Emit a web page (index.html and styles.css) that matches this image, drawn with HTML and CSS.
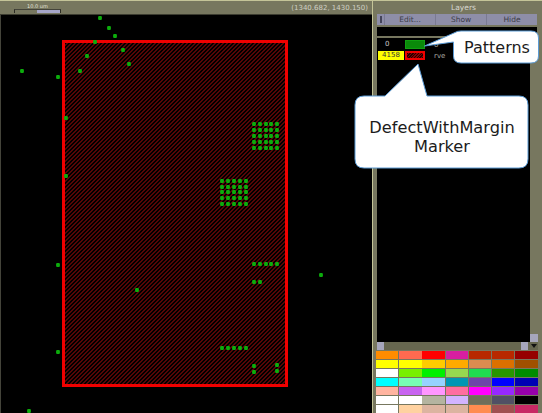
FILE: index.html
```html
<!DOCTYPE html>
<html lang="en">
<head>
  <meta charset="UTF-8" />
  <title>Layers</title>
  <link rel="stylesheet" href="styles.css">
</head>
<body>
  <div class="app">
    <div class="main">
      <div class="topbar">
        <div class="scale">
          <span class="scale-label">10.0 um</span>
          <div class="scale-bar"><div class="scale-fill"></div></div>
        </div>
        <span class="coords">(1340.682, 1430.150)</span>
      </div>
      <div class="canvas">
        <div class="marker"></div>
        <svg class="dots" id="dots" width="372" height="398" viewBox="0 15 372 398"></svg>
      </div>
    </div>

    <div class="panel">
      <div class="panel-title">Layers</div>
      <div class="toolbar">
        <button class="tool tool-menu"><span class="menu-mark"></span></button>
        <button class="tool">Edit...</button>
        <button class="tool">Show</button>
        <button class="tool">Hide</button>
      </div>
      <div class="filter"></div>
      <div class="list-wrap">
        <div class="list">
          <div class="layer">
            <span class="layer-count">0</span>
            <span class="swatch swatch-green"></span>
            <span class="layer-name">0</span>
          </div>
          <div class="layer">
            <span class="layer-count layer-count-on">4158</span>
            <span class="swatch swatch-red"></span>
            <span class="layer-name">rve</span>
          </div>
        </div>
        <div class="vscroll">
          <span class="vscroll-up"></span>
        </div>
      </div>
      <div class="hscroll">
        <span class="scroll-btn"></span>
        <span class="scroll-btn scroll-btn-right"></span>
        <span class="scroll-corner"></span>
      </div>
      <div class="palette" id="palette"></div>
    </div>
  </div>

  <div class="callout callout-patterns">
    <svg width="116" height="36" viewBox="0 0 116 36"><path class="bubble" d="M0.5 16 L31 2.5 Q33 1 37 1 L107 1 Q114.5 1 114.5 8 L114.5 26 Q114.5 33 107 33 L37 33 Q29.5 33 29.5 26 L29.5 12 Z"/></svg>
    <span class="callout-text">Patterns</span>
  </div>
  <div class="callout callout-defect">
    <svg width="176" height="107" viewBox="0 0 176 107"><path class="bubble" d="M64 1 L73 33 L165 33 Q174 33 174 42 L174 96 Q174 105 165 105 L10 105 Q1 105 1 96 L1 42 Q1 33 10 33 L31 33 Z"/></svg>
    <span class="callout-text">DefectWithMargin<br>Marker</span>
  </div>

  <script>
    // defect dots, in page coordinates
    const dots = [
      [100,18],[109,28],[115,36],[95,42],[123,50],[87,56],[129,64],[80,71],[22,71],[58,77],
      [66,118],[66,176],[58,265],[137,290],[58,352],[29,411],[321,275],
      [254,264],[260,264],[266,264],[271,264],[277,264],[254,282],[260,282],
      [222,348],[228,348],[234,348],[240,348],[246,348],
      [254,366],[254,372],[277,365],[277,371]
    ];
    [254,260,266,271,277].forEach(x => [124,130,136,142,148].forEach(y => dots.push([x,y])));
    [222,228,234,240,246].forEach(x => [181,187,192,198,204].forEach(y => dots.push([x,y])));

    document.getElementById('dots').innerHTML = dots.map(d =>
      `<rect x="${d[0]-1.9}" y="${d[1]-1.9}" width="3.8" height="3.8" rx="1" fill="#0cac0c"/>`).join('');

    const colors = [
      '#ff8c00','#ff6a50','#ff0000','#d81ea0','#b82800','#b82800','#960000',
      '#ffff00','#ffff00','#ffcc00','#ffaa00','#dc8c50','#dc7000','#a05000',
      '#ffffff','#78f000','#00f000','#96d850','#20dc50','#289600','#008c00',
      '#00ffff','#78ffb4','#96d2ff','#0096b4','#6e46aa','#0000ff','#0000b4',
      '#ffb4a0','#c864f0','#ff96ff','#ff6ea0','#ff00ff','#9628ff','#9600aa',
      '#ffffff','#ffffff','#b4b4a0','#d2b4ff','#6e6e5a','#505064','#000000',
      '#ffffff','#ffd2a0','#dcb4a0','#dcb4a0','#ff8c50','#a05050','#c82864'
    ];
    document.getElementById('palette').innerHTML = colors.map(c =>
      `<span class="chip" style="background:${c}"></span>`).join('');
  </script>
</body>
</html>
```

FILE: styles.css
```css
html, body {
  margin: 0;
  padding: 0;
  height: 100%;
  overflow: hidden;
}

body {
  font-family: "DejaVu Sans", sans-serif;
  background: #000;
  position: relative;
}

.app {
  display: flex;
  height: 413px;
  width: 542px;
}

.main {
  width: 372px;
  flex: none;
  display: flex;
  flex-direction: column;
}

.topbar {
  height: 15px;
  flex: none;
  background: #77775f;
  border-top: 1px solid #c4c498;
  border-bottom: 1px solid #3c3c30;
  box-sizing: border-box;
  display: flex;
  justify-content: space-between;
  align-items: center;
  padding: 0 4px 0 14px;
  color: #d0d0c4;
  font-size: 7px;
}

.scale {
  width: 47px;
  text-align: center;
  line-height: 6px;
}

.scale-label {
  display: block;
  font-size: 5px;
  color: #e4e4dc;
}

.scale-bar {
  height: 3px;
  border-left: 1px solid #2c2c24;
  border-right: 1px solid #2c2c24;
  border-top: 1px solid #44443a;
  display: flex;
  justify-content: flex-end;
}

.scale-fill {
  width: 23px;
  background: #a6a6c8;
}

.canvas {
  flex: 1;
  position: relative;
  background: #000;
  border-left: 1px solid #44443a;
  overflow: hidden;
}

.marker {
  position: absolute;
  left: 61px;
  top: 25px;
  width: 220px;
  height: 341px;
  border: 3px solid #f00000;
  background: repeating-linear-gradient(135deg, #000 0, #000 1.414px, #560606 1.414px, #560606 2.828px);
}

.dots {
  position: absolute;
  left: -1px;
  top: 0;
  filter: blur(0.4px);
}

.panel {
  flex: 1;
  min-width: 0;
  background: #77775f;
  border-top: 1px solid #c4c498;
  border-left: 1px solid #c4c498;
  box-sizing: border-box;
  display: flex;
  flex-direction: column;
  padding: 0 4px 0 3px;
  font-size: 7.5px;
}

.panel-title {
  height: 14px;
  line-height: 13px;
  text-align: center;
  padding-left: 13px;
  color: #d8d8d0;
}

.toolbar {
  display: grid;
  grid-template-columns: 7px repeat(3, 1fr);
  height: 11px;
  margin-left: 1px;
  margin-right: 1px;
  flex: none;
  background: #8e8ea8;
}

.tool {
  border: none;
  border-left: 1px solid #7a7a92;
  background: #8e8ea8;
  color: #3c3c48;
  font: inherit;
  padding: 0;
}

.tool-menu {
  border-left: none;
  display: flex;
  justify-content: center;
  padding-top: 2px;
}

.menu-mark {
  width: 2px;
  height: 7px;
  background: #44445a;
}

.filter {
  height: 9px;
  margin: 2px 1px 0 1px;
  background: #000;
  flex: none;
}

.list-wrap {
  height: 304px;
  flex: none;
  display: flex;
  margin: 2px 0 0 1px;
}

.list {
  flex: 1;
  background: #000;
  padding-top: 2px;
}

.vscroll {
  width: 8px;
  background: #77775f;
  display: flex;
  flex-direction: column;
  justify-content: flex-end;
}

.vscroll-up {
  height: 8px;
  background: #a6a6bc;
}

.layer {
  display: flex;
  align-items: center;
  height: 9px;
  margin-bottom: 2px;
}

.layer-count {
  width: 26px;
  height: 9px;
  line-height: 9px;
  margin-left: 1px;
  padding-left: 7px;
  box-sizing: border-box;
  color: #c8c8c8;
  font-size: 7px;
}

.layer-count-on {
  background: #ffff00;
  color: #333;
  text-align: center;
  padding: 0;
}

.swatch {
  width: 20px;
  height: 9px;
  margin-left: 1px;
  box-sizing: border-box;
}

.swatch-green {
  background: #0a8a0a;
  border: 1px solid #10a010;
}

.swatch-red {
  background: repeating-linear-gradient(135deg, #200 0, #200 1px, #800 1px, #800 2px);
  border: 2px solid #f00000;
}

.layer-name {
  margin-left: 9px;
  font-size: 7px;
  color: #a8a8a0;
}

.hscroll {
  height: 8px;
  flex: none;
  margin-left: 1px;
  display: flex;
  align-items: center;
  justify-content: space-between;
  background: #66664f;
}

.scroll-btn {
  width: 7px;
  height: 8px;
  background: #a6a6bc;
}

.scroll-btn-right {
  margin-left: auto;
  margin-right: 3px;
}

.scroll-corner {
  width: 0;
  height: 0;
  margin-right: 1px;
  border-left: 3px solid transparent;
  border-right: 3px solid transparent;
  border-top: 4px solid #111;
}

.palette {
  display: grid;
  grid-template-columns: repeat(7, 22.4px);
  column-gap: 0.8px;
  grid-auto-rows: 8.2px;
  row-gap: 0.8px;
  margin: 1px 0 0 0;
  flex: none;
}

.chip {
  display: block;
}

.callout {
  position: absolute;
  color: #1c1c1c;
}

.callout svg {
  display: block;
}

.bubble {
  fill: #fff;
  stroke: #5b9bd5;
  stroke-width: 1;
}

.callout-text {
  position: absolute;
  text-align: center;
  font-size: 16px;
  line-height: 19px;
}

.callout-patterns {
  left: 424px;
  top: 30px;
}

.callout-patterns .callout-text {
  left: 30px;
  right: 0;
  top: 8px;
}

.callout-defect {
  left: 354px;
  top: 63px;
}

.callout-defect .callout-text {
  left: 0;
  right: 0;
  top: 55px;
  font-size: 16.2px;
}
```
